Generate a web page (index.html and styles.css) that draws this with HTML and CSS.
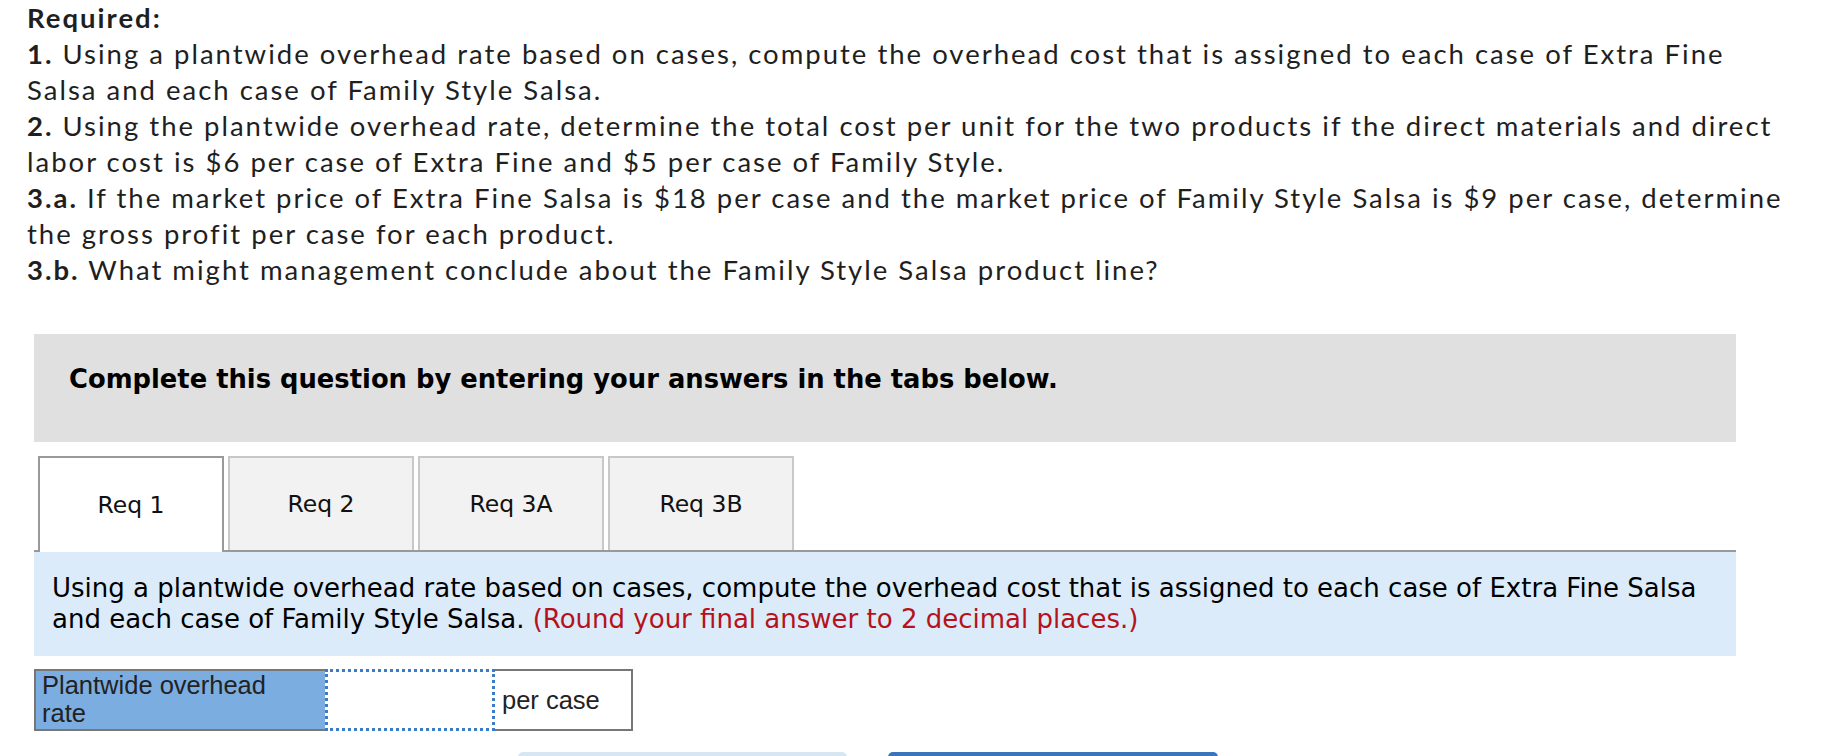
FILE: index.html
```html
<!DOCTYPE html>
<html lang="en">
<head>
<meta charset="utf-8">
<title>Required</title>
<link rel="stylesheet" href="styles.css">
</head>
<body>
<main class="page">
  <p class="required">
    <b>Required:</b><br>
    <b>1.</b> Using a plantwide overhead rate based on cases, compute the overhead cost that is assigned to each case of Extra Fine<br>
    Salsa and each case of Family Style Salsa.<br>
    <b>2.</b> Using the plantwide overhead rate, determine the total cost per unit for the two products if the direct materials and direct<br>
    labor cost is $6 per case of Extra Fine and $5 per case of Family Style.<br>
    <b>3.a.</b> If the market price of Extra Fine Salsa is $18 per case and the market price of Family Style Salsa is $9 per case, determine<br>
    the gross profit per case for each product.<br>
    <b>3.b.</b> What might management conclude about the Family Style Salsa product line?
  </p>

  <section class="quiz">
    <div class="banner">Complete this question by entering your answers in the tabs below.</div>

    <div class="tabs">
      <div class="tab active">Req 1</div>
      <div class="tab">Req 2</div>
      <div class="tab">Req 3A</div>
      <div class="tab">Req 3B</div>
    </div>

    <div class="instructions">
      Using a plantwide overhead rate based on cases, compute the overhead cost that is assigned to each case of Extra Fine Salsa<br>
      and each case of Family Style Salsa. <span class="note">(Round your final answer to 2 decimal places.)</span>
    </div>

    <div class="answer-row">
      <div class="label">Plantwide overhead<br>rate</div>
      <input class="answer" type="text" aria-label="Plantwide overhead rate">
      <div class="unit">per case</div>
    </div>

    <div class="nav">
      <button class="btn prev" type="button" aria-label="Previous"></button>
      <button class="btn next" type="button" aria-label="Next"></button>
    </div>
  </section>
</main>
</body>
</html>
```
FILE: styles.css
```css
html { overflow: hidden; }
body {
  margin: 0;
  background: #fff;
  color: #222;
}
.page {
  width: 1840px;
  height: 756px;
  overflow: hidden;
}
.required {
  margin: 0;
  padding: 0 0 0 27px;
  font-family: "Lato", "Open Sans", sans-serif;
  font-size: 27.5px;
  line-height: 36px;
  letter-spacing: 2px;
  white-space: nowrap;
  color: #1f1f1f;
}
.required b { font-weight: 700; }

.quiz {
  margin: 46px 0 0 34px;
  width: 1702px;
}
.banner {
  box-sizing: border-box;
  height: 108px;
  padding: 30px 0 0 35px;
  background: #e0e0e0;
  font-family: "DejaVu Sans", Verdana, sans-serif;
  font-weight: 700;
  font-size: 25.8px;
  color: #000;
}
.tabs {
  display: flex;
  align-items: flex-start;
  gap: 4px;
  height: 94px;
  margin-top: 14px;
  padding-left: 4px;
  border-bottom: 2px solid #999;
}
.tab {
  box-sizing: border-box;
  width: 186px;
  height: 94px;
  display: flex;
  align-items: center;
  justify-content: center;
  background: #f2f2f2;
  border: 2px solid #c8c8c8;
  border-bottom: none;
  font-family: "DejaVu Sans", Verdana, sans-serif;
  font-size: 23.5px;
  color: #111;
}
.tab.active {
  height: 96px;
  background: #fff;
  border-color: #999;
}
.instructions {
  padding: 21px 18px;
  background: #dbebf9;
  font-family: "DejaVu Sans", Verdana, sans-serif;
  font-size: 26px;
  line-height: 31px;
  color: #000;
  white-space: nowrap;
}
.note { color: #b5121b; }

.answer-row {
  display: flex;
  align-items: stretch;
  box-sizing: border-box;
  width: 599px;
  height: 62px;
  margin-top: 13px;
  border: 2px solid #777;
  font-family: "Liberation Sans", Arial, sans-serif;
  font-size: 25.5px;
  color: #222;
}
.label {
  width: 289px;
  box-sizing: border-box;
  padding: 0 0 0 6px;
  background: #7badE1;
  line-height: 28px;
}
.answer {
  box-sizing: border-box;
  width: 170px;
  height: 62px;
  margin: -2px 0;
  padding: 0 6px;
  border: 3px dotted #3b7bc8;
  background: #fff;
  outline: none;
  font: inherit;
  align-self: flex-start;
}
.unit {
  align-self: center;
  padding-left: 7px;
  line-height: 28px;
}
.nav {
  display: flex;
  gap: 41px;
  height: 4px;
  overflow: hidden;
  margin-top: 21px;
  padding-left: 484px;
}
.btn {
  flex: none;
  width: 330px;
  height: 44px;
  border: none;
  border-radius: 5px;
  padding: 0;
}
.btn.prev { width: 329px; background: #d8e5f3; }
.btn.next { background: #3a74ba; }
```
